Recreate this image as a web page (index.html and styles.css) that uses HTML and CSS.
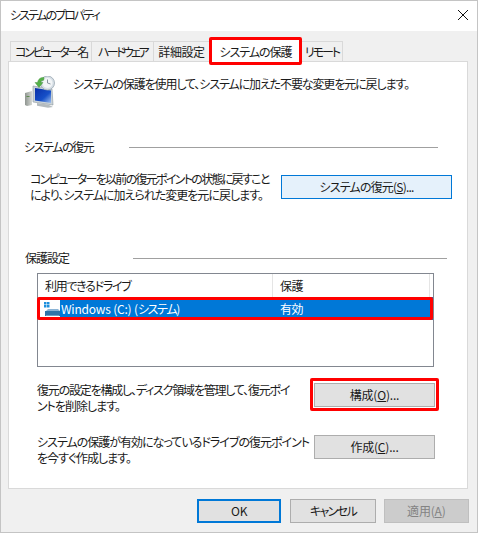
FILE: index.html
```html
<!DOCTYPE html>
<html lang="ja">
<head>
<meta charset="utf-8">
<title>システムのプロパティ</title>
<link rel="stylesheet" href="styles.css">
</head>
<body>
<div class="window">
  <header class="titlebar">
    <span class="title-text">システムのプロパティ</span>
    <svg class="close" width="12" height="12" viewBox="0 0 12 12"><path d="M1 1l10 10M11 1L1 11" stroke="#111" stroke-width="1" fill="none"/></svg>
  </header>
  <div class="body">
    <nav class="tabs">
      <div class="tab t1">コンピューター名</div>
      <div class="tab t2">ハードウェア</div>
      <div class="tab t3">詳細設定</div>
      <div class="tab active">システムの保護<i class="mark mark-tab"></i></div>
      <div class="tab t5">リモート</div>
    </nav>
    <main class="panel">
      <section class="intro">
        <svg class="shield" width="34" height="32" viewBox="0 0 34 32">
          <defs>
            <linearGradient id="scr" x1="0" y1="0" x2="1" y2="1"><stop offset="0" stop-color="#0a2fa8"/><stop offset=".6" stop-color="#1650c8"/><stop offset="1" stop-color="#9fc0ee"/></linearGradient>
            <linearGradient id="twr" x1="0" y1="0" x2="1" y2="0"><stop offset="0" stop-color="#8f9590"/><stop offset="1" stop-color="#d5d8d4"/></linearGradient>
          </defs>
          <path d="M1 17l7-2v14l-5 1-2-1z" fill="url(#twr)"/>
          <rect x="2.500" y="20" width="3" height="1" fill="#5d8a4e"/>
          <path d="M9 10l19 3 1 16-20-3z" fill="#c9d2d8" stroke="#8b979e" stroke-width=".6"/>
          <path d="M11 12l16 2.500v12.500l-16-2.500z" fill="url(#scr)"/>
          <path d="M13 27l11 1.500 5 2.500-5 .7-11-2z" fill="#b4bbbe"/>
          <circle cx="23.500" cy="7" r="7" fill="#d7dfe6" stroke="#9aa8b3" stroke-width=".8"/>
          <circle cx="23.500" cy="7" r="5" fill="#f2f5f7"/>
          <path d="M23.500 3.500V7l3 1" stroke="#7a8892" stroke-width=".9" fill="none"/>
          <path d="M20 1.500c-3-.5-6 1.500-6.500 5l-2.500 0 4 5 4-5-2.300 0c.3-1.500 1.500-2.200 3-2.300z" fill="#55b048" stroke="#3a8a33" stroke-width=".4"/>
        </svg>
        <p>システムの保護を使用して、システムに加えた不要な変更を元に戻します。</p>
      </section>

      <div class="legend legend-restore"><span>システムの復元</span><i></i></div>
      <section class="restore">
        <p><span class="tight">コンピューターを以前の復元ポイントの状態に戻すこと</span><br>により、システムに加えられた変更を元に戻します。</p>
        <button class="btn btn-hover btn-restore">システムの復元(<u>S</u>)...</button>
      </section>

      <div class="legend legend-protect"><span>保護設定</span><i></i></div>
      <section class="list">
        <div class="list-head">
          <div class="col-drive">利用できるドライブ</div>
          <div class="col-state">保護</div>
          <div class="col-rest"></div>
        </div>
        <div class="list-row">
          <svg class="drive" width="17" height="17" viewBox="0 0 17 17">
            <rect x="1" y="1" width="2.500" height="2.500" fill="#1c8fdc"/><rect x="4" y="1" width="2.500" height="2.500" fill="#1c8fdc"/>
            <rect x="1" y="4" width="2.500" height="2.500" fill="#1c8fdc"/><rect x="4" y="4" width="2.500" height="2.500" fill="#1c8fdc"/>
            <path d="M3 10l2-2h10l2 2z" fill="#8ab4d6"/>
            <rect x="2" y="10" width="15" height="5" fill="#2f74a8"/>
            <rect x="3" y="14" width="13" height="1" fill="#6f9fc4"/>
          </svg>
          <div class="sel"><span class="sel-name"><span class="latin">Windows (C:) (</span>システム)</span><span class="sel-state">有効</span></div>
          <i class="mark mark-row"></i>
        </div>
      </section>

      <section class="action action-config">
        <p><span class="config-line">復元の設定を構成し、ディスク領域を管理して、復元ポイ</span><br>ントを削除します。</p>
        <button class="btn btn-act">構成(<u>O</u>)...<i class="mark mark-btn"></i></button>
      </section>
      <section class="action action-create">
        <p>システムの保護が有効になっているドライブの復元ポイント<br>を今すぐ作成します。</p>
        <button class="btn btn-act">作成(<u>C</u>)...</button>
      </section>
    </main>
    <footer class="footer">
      <button class="btn btn-foot btn-default"><span class="latin">OK</span></button>
      <button class="btn btn-foot btn-cancel">キャンセル</button>
      <button class="btn btn-foot btn-disabled">適用(<u>A</u>)</button>
    </footer>
  </div>
</div>
</body>
</html>
```

FILE: styles.css
```css
* { box-sizing: border-box; }
html, body { margin: 0; padding: 0; background: #fff; }
body {
  font-family: "Noto Sans CJK JP", "Noto Sans", sans-serif;
  font-size: 12px;
  line-height: 16px;
  color: #1a1a1a;
  font-feature-settings: "palt";
  letter-spacing: -1px;
}
p { margin: 0; }
i { display: block; font-style: normal; }
.latin { letter-spacing: -.2px; }
.tight { letter-spacing: -1.7px; }
.config-line { letter-spacing: -1.2px; }
.window {
  width: 478px;
  height: 533px;
  border: 1px solid #c4c4c4;
  display: flex;
  flex-direction: column;
}
.titlebar {
  height: 30px;
  background: #fff;
  display: flex;
  align-items: center;
  justify-content: space-between;
  padding: 0 8px 2px 9px;
  flex: none;
}
.title-text { letter-spacing: -2px; }
.body {
  flex: 1;
  background: #f0f0f0;
  padding: 10px 8px 0 7px;
  display: flex;
  flex-direction: column;
}
.tabs { display: flex; height: 20px; padding-left: 2px; flex: none; position: relative; z-index: 1; }
.tab {
  position: relative;
  height: 21px;
  border: 1px solid #d9d9d9;
  border-left-width: 0;
  background: #f0f0f0;
  display: flex;
  align-items: center;
  justify-content: center;
  white-space: nowrap;
}
.t1 { width: 82px; border-left-width: 1px; letter-spacing: -2.2px; }
.t2 { width: 62px; letter-spacing: -2.6px; }
.t3 { width: 56px; letter-spacing: -.4px; }
.active {
  width: 92px;
  height: 24px;
  margin-top: -2px;
  background: #fff;
  border-bottom: 0;
  z-index: 2;
}
.t5 { width: 41px; letter-spacing: -2px; }
.mark {
  position: absolute;
  border: 3px solid #f00;
  border-radius: 2px;
  pointer-events: none;
}
.mark-tab { left: -1px; right: -1px; top: -3px; bottom: -2px; }
.mark-row { left: -1px; right: 0; top: 0; bottom: 0; }
.mark-btn { left: -5px; right: -5px; top: -6px; bottom: -5px; }
.panel {
  width: 460px;
  height: 428px;
  background: #fff;
  border: 1px solid #d9d9d9;
  flex: none;
}
.intro {
  height: 77px;
  padding: 14px 0 0 15px;
  display: flex;
}
.shield { flex: none; }
.intro p { margin: 0 0 0 15px; letter-spacing: -1.1px; }
.legend { display: flex; align-items: center; height: 16px; padding-left: 15px; }
.legend i { flex: 1; height: 1px; background: #a0a0a0; }
.legend-restore span { width: 105px; letter-spacing: -1.4px; }
.legend-restore i { margin-right: 29px; }
.legend-protect { margin-top: 51px; padding-left: 16px; }
.legend-protect span { width: 108px; }
.legend-protect i { margin-right: 20px; }
.restore {
  margin-top: 20px;
  padding-left: 21px;
  display: flex;
  height: 24px;
}
.restore p { width: 251px; margin-top: -4px; flex: none; white-space: nowrap; }
.btn {
  position: relative;
  font: inherit;
  letter-spacing: inherit;
  font-feature-settings: "palt";
  color: #1a1a1a;
  background: #e1e1e1;
  border: 1px solid #adadad;
  border-radius: 0;
  padding: 0;
  height: 24px;
  white-space: nowrap;
}
.btn-hover { background: #e5f1fb; border-color: #0078d7; }
.btn-restore { width: 171px; letter-spacing: -.8px; }
.list {
  margin: 7px 0 0 28px;
  width: 397px;
  height: 94px;
  border: 1px solid #828790;
}
.list-head { display: flex; height: 23px; }
.list-head > div { border-right: 1px solid #e5e5e5; line-height: 23px; padding-left: 7px; }
.col-drive { width: 235px; letter-spacing: -1.3px; }
.col-state { width: 157px; letter-spacing: -.5px; }
.col-rest { flex: 1; padding: 0 !important; border: 0 !important; }
.list-row { position: relative; height: 23px; display: flex; align-items: stretch; }
.drive { flex: none; margin: 4px 0 0 5px; width: 17px; height: 17px; }
.sel {
  flex: 1;
  background: #0078d7;
  color: #fff;
  display: flex;
  align-items: center;
  line-height: 23px;
  padding-left: 1px;
}
.sel-name { width: 219px; flex: none; letter-spacing: -1.3px; }
.sel-state { letter-spacing: -.5px; }
.action { display: flex; margin-left: 28px; height: 24px; }
.action p { width: 277px; flex: none; white-space: nowrap; margin-top: -1px; }
.action-config { margin-top: 16px; }
.action-create { margin-top: 28px; }
.btn-act { width: 121px; letter-spacing: -.2px; }
.footer {
  display: flex;
  padding: 10px 0 0 189px;
  flex: none;
}
.btn-foot { width: 85px; height: 24px; margin-right: 9px; }
.btn-default { border: 2px solid #0078d7; }
.btn-cancel { margin-right: 8px; width: 86px; letter-spacing: -1.6px; }
.btn-disabled { background: #ccc; border-color: #bfbfbf; color: #838383; margin-right: 0; width: 86px; letter-spacing: -.2px; }
```
